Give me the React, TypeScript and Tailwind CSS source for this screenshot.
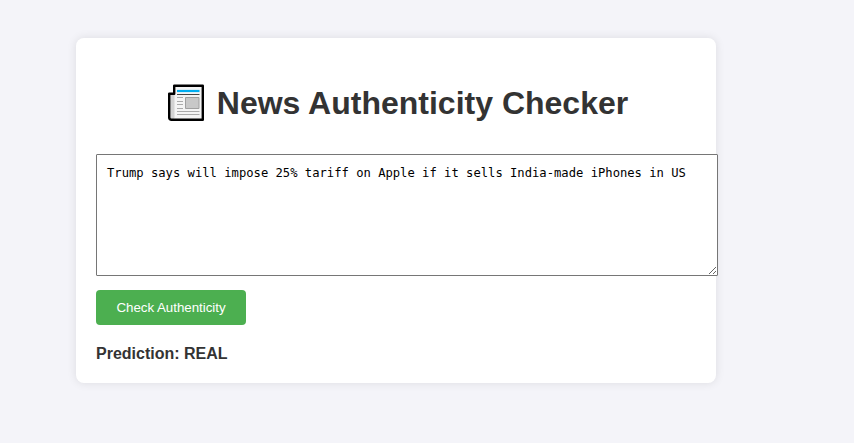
function NewspaperIcon() {
  return (
    <svg className="mr-3 h-[38px] w-[38px] shrink-0" viewBox="0 -0.5 38 38" fill="none">
      <path d="M7.5 1.2H35.8V35.5H4.5Q2.2 35.5 2.2 33V9.2H7.5Z" fill="#f4f4f4" />
      <path d="M3 10H7.5V33Q7.5 34.5 6 34.5H4.5Q3 34.5 3 33Z" fill="#d2d2d2" />
      <path d="M7.2 1.2H35.8V35.3H4.5Q2.2 35.3 2.2 33V9.2H7.2Z" stroke="#000" strokeWidth="2.4" strokeLinejoin="round" />
      <path d="M10 6.5H32.5" stroke="#00adef" strokeWidth="2.2" />
      <path d="M10 10H32.5" stroke="#444" strokeWidth="1" />
      <path d="M10 13H16M10 17H16M10 20H16M10 24H16M10 27H32.5M10 30H32.5" stroke="#aaa" strokeWidth="1" />
      <path d="M18.5 13H32V24H18.5Z" fill="#c8c8c8" stroke="#a0a0a0" />
    </svg>
  );
}

export default function App() {
  return (
    <div className="min-h-screen bg-[#f4f4f9] pt-[38px] pl-[76px] font-['Liberation_Sans',Arial,sans-serif] text-[#333]">
      <main className="h-[345px] w-[640px] rounded-[8px] bg-white p-5 shadow-[0_0_10px_rgba(0,0,0,0.1)]">
        <h1 className="mt-[21px] flex h-[48px] items-center justify-center pl-[3px] text-[32px] font-bold leading-[48px]">
          <NewspaperIcon />
          News Authenticity Checker
        </h1>
        <textarea
          className="mt-[27px] block h-[122px] w-[622px] rounded-[1px] border border-[#767676] bg-white p-[10px] font-['DejaVu_Sans_Mono',monospace] text-[12.18px] leading-[16px] text-black"
          defaultValue="Trump says will impose 25% tariff on Apple if it sells India-made iPhones in US"
          spellCheck={false}
        />
        <button className="mt-[14px] block h-[35px] w-[150px] rounded-[4px] bg-[#4caf50] text-[13.333px] tracking-[-0.03px] text-white">Check Authenticity</button>
        <p className="mt-[20px] text-[16px] font-bold leading-[18px]">Prediction: REAL</p>
      </main>
    </div>
  );
}
